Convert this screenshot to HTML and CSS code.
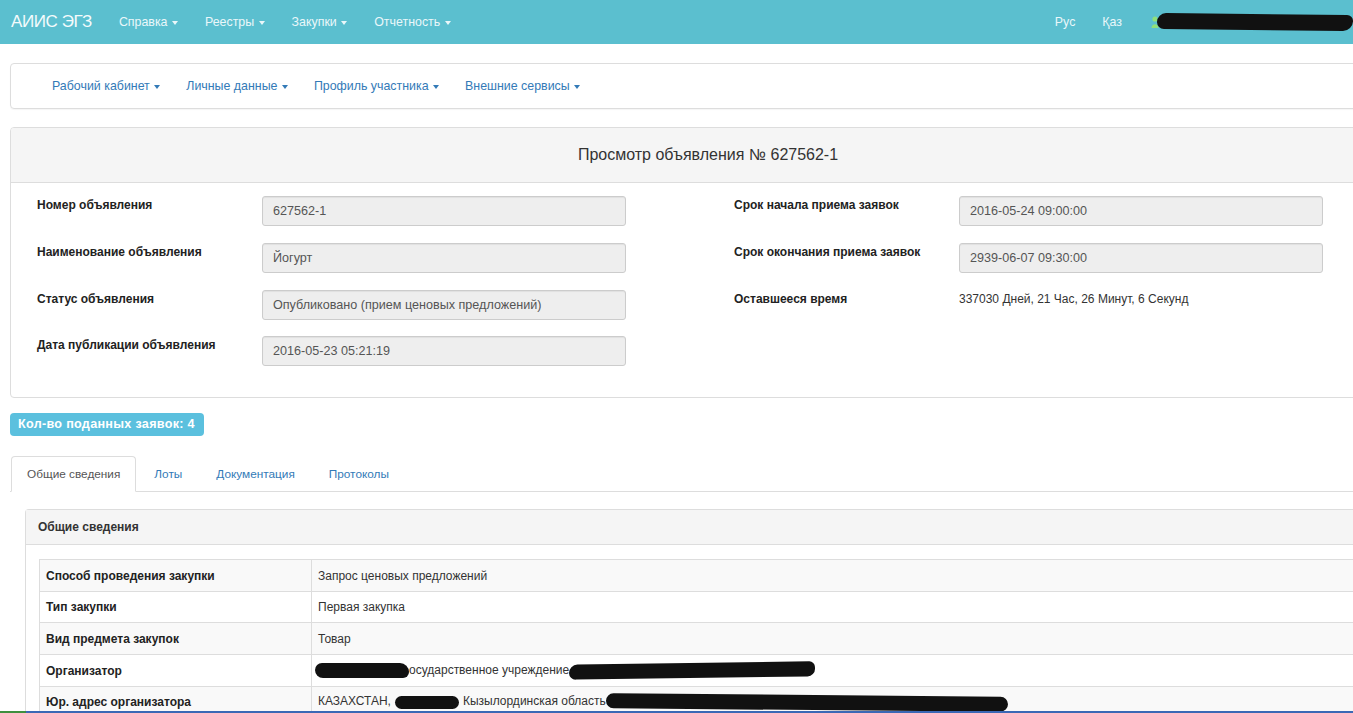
FILE: index.html
```html
<!DOCTYPE html>
<html lang="ru">
<head>
<meta charset="utf-8">
<title>Просмотр объявления</title>
<link rel="stylesheet" href="styles.css">
</head>
<body>
<nav class="topbar">
  <div class="brand">АИИС ЭГЗ</div>
  <ul class="topmenu">
    <li>Справка <span class="caret"></span></li>
    <li>Реестры <span class="caret"></span></li>
    <li>Закупки <span class="caret"></span></li>
    <li>Отчетность <span class="caret"></span></li>
  </ul>
  <div class="topright">
    <span class="lang">Рус</span>
    <span class="lang">Қаз</span>
    <span class="user">
      <svg class="user-ico" width="8" height="12" viewBox="0 0 8 12"><circle cx="4" cy="3" r="2.6" fill="#8fe07a"/><path d="M0.5 12 C0.5 7 7.5 7 7.5 12 Z" fill="#8fe07a"/></svg>
      <span class="redact redact-user"></span>
    </span>
  </div>
</nav>

<div class="page">
  <div class="subnav">
    <span class="sublink">Рабочий кабинет <span class="caret"></span></span>
    <span class="sublink">Личные данные <span class="caret"></span></span>
    <span class="sublink">Профиль участника <span class="caret"></span></span>
    <span class="sublink">Внешние сервисы <span class="caret"></span></span>
  </div>

  <section class="panel">
    <div class="panel-title">Просмотр объявления № 627562-1</div>
    <div class="panel-body form-grid">
      <div class="form-col">
        <div class="form-row"><label>Номер объявления</label><div class="field">627562-1</div></div>
        <div class="form-row"><label>Наименование объявления</label><div class="field">Йогурт</div></div>
        <div class="form-row"><label>Статус объявления</label><div class="field">Опубликовано (прием ценовых предложений)</div></div>
        <div class="form-row"><label>Дата публикации объявления</label><div class="field">2016-05-23 05:21:19</div></div>
      </div>
      <div class="form-col">
        <div class="form-row"><label>Срок начала приема заявок</label><div class="field">2016-05-24 09:00:00</div></div>
        <div class="form-row"><label>Срок окончания приема заявок</label><div class="field">2939-06-07 09:30:00</div></div>
        <div class="form-row"><label>Оставшееся время</label><div class="plain">337030 Дней, 21 Час, 26 Минут, 6 Секунд</div></div>
      </div>
    </div>
  </section>

  <div class="badge">Кол-во поданных заявок: 4</div>

  <ul class="tabs">
    <li class="tab active">Общие сведения</li>
    <li class="tab">Лоты</li>
    <li class="tab">Документация</li>
    <li class="tab">Протоколы</li>
  </ul>

  <div class="tab-content">
    <section class="inner-panel">
      <div class="inner-heading">Общие сведения</div>
      <div class="inner-body">
        <table class="info">
          <tr><th>Способ проведения закупки</th><td>Запрос ценовых предложений</td></tr>
          <tr><th>Тип закупки</th><td>Первая закупка</td></tr>
          <tr><th>Вид предмета закупок</th><td>Товар</td></tr>
          <tr><th>Организатор</th><td><span class="redact r1"></span>осударственное учреждение<span class="redact r2"></span></td></tr>
          <tr><th>Юр. адрес организатора</th><td>КАЗАХСТАН,<span class="redact r3"></span>Кызылординская область<span class="redact r4"></span></td></tr>
        </table>
      </div>
    </section>
  </div>
</div>
<div class="taskbar-edge"></div>
</body>
</html>
```
FILE: styles.css
```css
html, body {
  margin: 0;
  padding: 0;
}
body {
  font-family: "Liberation Sans", Arial, sans-serif;
  font-size: 12px;
  color: #333;
  background: #fff;
  overflow: hidden;
  width: 1353px;
  height: 713px;
}
ul { list-style: none; margin: 0; padding: 0; }

.caret {
  display: inline-block;
  width: 0;
  height: 0;
  margin-left: 1px;
  vertical-align: middle;
  border-top: 4px solid currentColor;
  border-left: 3px solid transparent;
  border-right: 3px solid transparent;
}

.topbar {
  height: 44px;
  background: #5bbfcf;
  display: flex;
  align-items: center;
  color: #fff;
}
.brand {
  font-size: 17px;
  font-weight: 300;
  margin-left: 11px;
  color: #f4fbfc;
  letter-spacing: -0.4px;
}
.topmenu {
  display: flex;
  margin-left: 27px;
}
.topmenu li {
  font-size: 12.4px;
  color: #eaf7fa;
  margin-right: 27px;
}
.topright {
  margin-left: auto;
  display: flex;
  align-items: center;
}
.lang {
  font-size: 12.4px;
  color: #eaf7fa;
  margin-right: 27px;
}
.user {
  display: flex;
  align-items: center;
  margin-left: 2px;
}
.user-ico { margin-right: -2px; }
.redact {
  display: inline-block;
  background: #111;
  border-radius: 8px;
  vertical-align: middle;
}
.redact-user {
  width: 196px;
  height: 16px;
  border-radius: 9px 6px 10px 7px;
  transform: rotate(0.6deg);
}

.page {
  width: 1396px;
  margin-left: 10px;
}

.subnav {
  margin-top: 19px;
  height: 44px;
  border: 1px solid #ddd;
  border-radius: 4px;
  display: flex;
  align-items: center;
  padding-left: 41px;
  box-shadow: 0 1px 1px rgba(0,0,0,0.04);
}
.sublink {
  font-size: 12.4px;
  color: #337ab7;
  margin-right: 26px;
}

.panel {
  margin-top: 18px;
  border: 1px solid #ddd;
  border-radius: 4px;
}
.panel-title {
  height: 54px;
  background: #f5f5f5;
  border-bottom: 1px solid #ddd;
  display: flex;
  align-items: center;
  justify-content: center;
  font-size: 16px;
  color: #333;
  border-radius: 3px 3px 0 0;
}
.panel-body {
  padding: 13px 0 31px;
}
.form-grid {
  display: grid;
  grid-template-columns: 1fr 1fr;
}
.form-col {
  display: flex;
  flex-direction: column;
  gap: 17px;
  padding-left: 26px;
}
.form-row {
  display: flex;
  align-items: flex-start;
  height: 30px;
}
.form-row:nth-child(4) { margin-top: -1px; }
.form-row label {
  width: 225px;
  font-weight: bold;
  font-size: 12px;
  padding-top: 2px;
  color: #222;
}
.field {
  width: 352px;
  height: 28px;
  padding-left: 10px;
  background: #eee;
  border: 1px solid #ccc;
  border-radius: 3px;
  display: flex;
  align-items: center;
  font-size: 12.6px;
  color: #555;
  box-shadow: inset 0 1px 1px rgba(0,0,0,0.06);
}
.plain {
  padding-top: 2px;
  font-size: 12px;
  color: #333;
}

.badge {
  display: inline-block;
  margin-top: 15px;
  background: #5bc0de;
  color: #fff;
  font-weight: bold;
  font-size: 12.6px;
  padding: 4px 9px 5px 8px;
  border-radius: 4px;
  letter-spacing: 0.3px;
}

.tabs {
  display: flex;
  margin-top: 20px;
  border-bottom: 1px solid #ddd;
  padding-left: 1px;
}
.tab {
  font-size: 11.8px;
  color: #337ab7;
  padding: 10px 15px 9px;
  margin-right: 2px;
  margin-bottom: -1px;
  border: 1px solid transparent;
  border-radius: 4px 4px 0 0;
  line-height: 15px;
}
.tab.active {
  color: #555;
  border-color: #ddd #ddd #fff;
  background: #fff;
}

.tab-content {
  padding: 17px 0 0 15px;
}
.inner-panel {
  border: 1px solid #ddd;
  border-right: none;
  border-radius: 4px 0 0 4px;
}
.inner-heading {
  height: 34px;
  background: #f5f5f5;
  border-bottom: 1px solid #ddd;
  display: flex;
  align-items: center;
  padding-left: 12px;
  font-weight: bold;
  font-size: 12px;
  color: #333;
}
.inner-body {
  padding: 14px 0 0 13px;
}
.info {
  width: 100%;
  border-collapse: collapse;
  font-size: 12px;
}
.info th, .info td {
  border: 1px solid #ddd;
  padding: 0 6px;
  height: 30px;
  text-align: left;
  white-space: nowrap;
}
.info th {
  width: 259px;
  font-weight: bold;
  color: #222;
}
.info td { color: #333; }
.info tr:nth-child(odd) { background: #f9f9f9; }
.info tr:nth-child(1) th, .info tr:nth-child(1) td,
.info tr:nth-child(3) th, .info tr:nth-child(3) td,
.info tr:nth-child(4) th, .info tr:nth-child(4) td { height: 31px; }

.r1 { width: 94px; height: 15px; margin-left: -3px; border-radius: 7px 9px 6px 8px; }
.r2 { width: 246px; height: 15px; border-radius: 9px 6px 8px 7px; transform: rotate(-0.8deg); }
.r3 { width: 64px; height: 13px; margin: 0 4px; }
.r4 { width: 402px; height: 15px; transform: rotate(0.5deg); }

.taskbar-edge {
  position: fixed;
  left: 0;
  right: 0;
  bottom: 0;
  height: 2px;
  background: linear-gradient(to right, #3f8f3f 0, #3f8f3f 26px, #3b68b5 26px, #3b68b5 100%);
}
```
